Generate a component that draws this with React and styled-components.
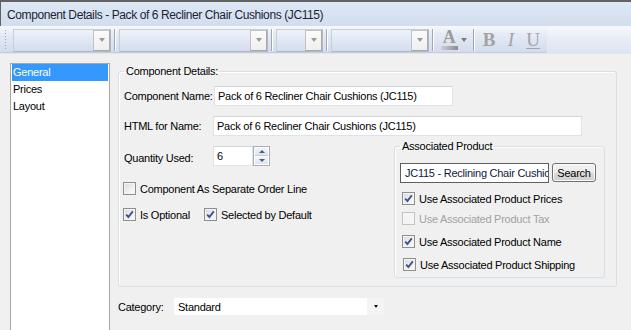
import React from 'react';
import styled, { createGlobalStyle, css } from 'styled-components';

const Global = createGlobalStyle`
  html, body { margin: 0; padding: 0; }
  body {
    background: #f0f0f0;
    width: 631px;
    height: 330px;
    overflow: hidden;
    font-family: "Liberation Sans", Arial, sans-serif;
    font-size: 11px;
    letter-spacing: -0.25px;
    color: #000;
  }
  * { box-sizing: border-box; }
`;

const Window = styled.div`
  width: 631px;
  height: 330px;
  display: flex;
  flex-direction: column;
  overflow: hidden;
`;

const TitleBar = styled.div`
  height: 26px;
  flex: none;
  border-top: 2px solid #626262;
  border-left: 1px solid #626262;
  background: linear-gradient(#dde7f4, #d2deee);
  display: flex;
  align-items: center;
  padding: 2px 0 0 6px;
  font-size: 12px;
  letter-spacing: -0.4px;
  color: #1c2433;
  white-space: nowrap;
`;

const Toolbar = styled.div`
  height: 28px;
  flex: none;
  display: flex;
  background: linear-gradient(#f6f8fc 0%, #e9eef7 40%, #dde4f1 100%);
  border-bottom: 1px solid #e2e6ee;
`;

const ToolStrip = styled.div`
  width: 547px;
  flex: none;
  height: 100%;
  display: flex;
  align-items: center;
  padding: 2px 0 0 4px;
  background: linear-gradient(#f7f9fc 0%, #e6ebf5 30%, #d3dbee 100%);
  border-bottom: 1px solid #c4cde0;
  & > * { flex: none; }
`;

const Grip = styled.span`
  width: 3px;
  height: 22px;
  margin-right: 6px;
  background-image: radial-gradient(circle, #9aa3b2 0.8px, transparent 1px);
  background-size: 3px 3px;
`;

const ToolCombo = styled.div`
  width: ${p => p.$w}px;
  height: 23px;
  display: flex;
  justify-content: flex-end;
  border: 1px solid #b3b9c3;
  border-top-color: #c8ced8;
  border-left-color: #c8ced8;
  background: linear-gradient(#eef2fa, #d3dcee);
`;

const ComboBtn = styled.div`
  width: 17px;
  height: 100%;
  display: flex;
  align-items: center;
  justify-content: center;
  border: 1px solid #c2c2c2;
  border-right-color: #a9a9a9;
  border-bottom-color: #a9a9a9;
  background: linear-gradient(#fbfbfb, #efefef);
`;

const Tri = styled.span`
  width: 0;
  height: 0;
  border-left: ${p => p.$s || 3.5}px solid transparent;
  border-right: ${p => p.$s || 3.5}px solid transparent;
  border-top: ${p => (p.$s ? p.$s + 0.5 : 4)}px solid ${p => p.$c || '#9a9a9a'};
`;

const Sep = styled.span`
  width: 2px;
  height: 22px;
  margin: 0 3px;
  border-left: 1px solid #9ea7b6;
  border-right: 1px solid #ffffff;
`;

const ColorBtn = styled.span`
  width: 18px;
  margin-left: 3px;
  display: flex;
  flex-direction: column;
  align-items: center;
  font-family: "Liberation Serif", serif;
  font-weight: bold;
  font-size: 18px;
  line-height: 14px;
  color: #9c9c9c;
`;

const ColorBar = styled.span`
  width: 17px;
  height: 4px;
  margin-top: 2px;
  background: linear-gradient(90deg, #d0d0d0, #8c8c8c);
`;

const SmallArrow = styled.span`
  margin: 0 2px 0 3px;
  width: 7px;
  display: flex;
`;

const FmtBtn = styled.span`
  width: 22px;
  text-align: center;
  font-family: "Liberation Serif", serif;
  font-size: 19px;
  line-height: 20px;
  letter-spacing: 0;
  color: #a3a3a3;
  ${p => p.$b && css`font-weight: bold;`}
  ${p => p.$i && css`font-style: italic;`}
  ${p => p.$u && css`text-decoration: underline; text-underline-offset: 2px;`}
`;

const Main = styled.div`
  flex: 1;
  display: flex;
  align-items: flex-start;
  padding: 9px 0 0 10px;
`;

const SideList = styled.ul`
  list-style: none;
  margin: 0;
  padding: 0 1px;
  width: 100px;
  height: 290px;
  flex: none;
  background: #fff;
  border: 1px solid #a6a6a6;
`;

const SideItem = styled.li`
  height: 17px;
  line-height: 17px;
  padding-left: 1px;
  color: ${p => (p.$sel ? '#fff' : '#000')};
  background: ${p => (p.$sel ? '#3399ff' : 'transparent')};
`;

const Content = styled.div`
  margin: 2px 0 0 8px;
  display: flex;
  flex-direction: column;
`;

const Group = styled.fieldset`
  margin: 0;
  width: ${p => p.$w}px;
  height: ${p => p.$h}px;
  padding: ${p => p.$pad};
  border: 1px solid #d5dfe5;
  border-radius: 3px;
  box-shadow: inset 1px 1px 0 #fff;
  display: flex;
  flex-direction: column;
`;

const Legend = styled.legend`
  padding: 0 2px;
  line-height: 13px;
  font-size: 11px;
`;

const FormRow = styled.div`
  display: flex;
  align-items: center;
  height: 20px;
  margin-top: ${p => p.$mt || 0}px;
`;

const FieldLabel = styled.span`
  width: ${p => p.$w || 89}px;
  flex: none;
  white-space: nowrap;
  padding-top: ${p => p.$pt || 0}px;
`;

const TextBox = styled.input`
  width: ${p => p.$w}px;
  height: ${p => p.$h || 20}px;
  margin: 0 0 0 ${p => p.$ml || 0}px;
  padding: 0 0 0 ${p => p.$pl || 3}px;
  font-family: "Liberation Sans", Arial, sans-serif;
  font-size: 11px;
  letter-spacing: -0.25px;
  color: ${p => p.$c || '#000'};
  background: #fff;
  border: 1px solid ${p => (p.$dark ? '#5f5f5f' : '#dfe2e8')};
  border-top-color: ${p => (p.$dark ? '#5f5f5f' : '#d0d3da')};
  outline: none;
`;

const SplitRow = styled.div`
  display: flex;
  align-items: flex-start;
  margin-top: 4px;
`;

const LeftCol = styled.div`
  width: 270px;
  padding-top: 6px;
  display: flex;
  flex-direction: column;
`;

const Spinner = styled.div`
  display: flex;
  width: 57px;
  height: 20px;
`;

const SpinBtns = styled.div`
  width: 17px;
  height: 20px;
  display: flex;
  flex-direction: column;
  border: 1px solid #a9adb5;
  background: #fff;
`;

const SpinBtn = styled.div`
  flex: 1;
  display: flex;
  align-items: center;
  justify-content: center;
  background: linear-gradient(#f2f6fb, #dbe4f0);
  border: 1px solid #fff;
  border-bottom-color: ${p => (p.$top ? '#c7ccd5' : '#fff')};
`;

const SpinTri = styled.span`
  width: 0;
  height: 0;
  border-left: 3.5px solid transparent;
  border-right: 3.5px solid transparent;
  ${p => (p.$up
    ? css`border-bottom: 3.5px solid #4c5f82;`
    : css`border-top: 3.5px solid #4c5f82;`)}
`;

const CheckRow = styled.div`
  display: flex;
  align-items: center;
  margin-top: ${p => p.$mt || 0}px;
  margin-left: ${p => p.$ml || 0}px;
`;

const CheckItem = styled.label`
  display: flex;
  align-items: center;
  gap: 4px;
  height: 13px;
  white-space: nowrap;
  width: ${p => (p.$w ? `${p.$w}px` : 'auto')};
  color: ${p => (p.$disabled ? '#a2a2a2' : '#000')};
`;

const Box = styled.span`
  width: 13px;
  height: 13px;
  flex: none;
  display: flex;
  align-items: center;
  justify-content: center;
  border: 1px solid ${p => (p.$disabled ? '#c3c3c3' : '#8e8f8f')};
  background: ${p => (p.$disabled
    ? '#f4f4f4'
    : 'linear-gradient(135deg, #d9d9d9 0%, #f1f1f1 60%, #fbfbfb 100%)')};
  box-shadow: inset 0 0 0 1px ${p => (p.$disabled ? '#f7f7f7' : '#f3f3f3')};
`;

const Check = ({ checked, disabled, label, w }) => (
  <CheckItem $disabled={disabled} $w={w}>
    <Box $disabled={disabled}>
      {checked && (
        <svg width="9" height="9" viewBox="0 0 9 9">
          <path d="M1.2 4.6 L3.4 7 L7.8 1.3" fill="none" stroke="#3f5291" strokeWidth="1.9" />
        </svg>
      )}
    </Box>
    {label}
  </CheckItem>
);

const AssocInputRow = styled.div`
  display: flex;
  align-items: flex-start;
  gap: 3px;
`;

const SearchButton = styled.button`
  width: 44px;
  height: 19px;
  padding: 0;
  font-family: "Liberation Sans", Arial, sans-serif;
  font-size: 11px;
  letter-spacing: -0.25px;
  color: #000;
  border: 1px solid #707070;
  border-radius: 3px;
  background: linear-gradient(#f2f2f2 0%, #ebebeb 50%, #dddddd 51%, #cfcfcf 100%);
  box-shadow: inset 0 0 0 1px #fcfcfc;
`;

const CategoryRow = styled.div`
  display: flex;
  align-items: center;
  margin: 10px 0 0 0;
`;

const Select = styled.div`
  width: 212px;
  height: 19px;
  display: flex;
  align-items: center;
  background: #fff;
  border: 1px solid #eef0f3;
`;

const SelectText = styled.span`
  flex: 1;
  padding-left: 4px;
`;

const SelectBtn = styled.span`
  width: 17px;
  height: 100%;
  display: flex;
  align-items: center;
  justify-content: center;
  background: #f4f4f4;
`;

export default function App() {
  return (
    <>
      <Global />
      <Window>
        <TitleBar>Component Details - Pack of 6 Recliner Chair Cushions (JC115)</TitleBar>
        <Toolbar>
          <ToolStrip>
            <Grip />
            <ToolCombo $w={98}><ComboBtn><Tri /></ComboBtn></ToolCombo>
            <Sep />
            <ToolCombo $w={149}><ComboBtn><Tri /></ComboBtn></ToolCombo>
            <Sep />
            <ToolCombo $w={47}><ComboBtn><Tri /></ComboBtn></ToolCombo>
            <Sep />
            <ToolCombo $w={98}><ComboBtn><Tri /></ComboBtn></ToolCombo>
            <Sep />
            <ColorBtn>A<ColorBar /></ColorBtn>
            <SmallArrow><Tri $c="#7a7a7a" /></SmallArrow>
            <Sep />
            <FmtBtn $b>B</FmtBtn>
            <FmtBtn $i>I</FmtBtn>
            <FmtBtn $u>U</FmtBtn>
          </ToolStrip>
        </Toolbar>
        <Main>
          <SideList>
            <SideItem $sel>General</SideItem>
            <SideItem>Prices</SideItem>
            <SideItem>Layout</SideItem>
          </SideList>
          <Content>
            <Group $w={499} $h={222} $pad="8px 5px 0 5px">
              <Legend>Component Details:</Legend>
              <FormRow>
                <FieldLabel>Component Name:</FieldLabel>
                <TextBox $w={239} $ml={1} readOnly value="Pack of 6 Recliner Chair Cushions (JC115)" />
              </FormRow>
              <FormRow $mt={10}>
                <FieldLabel>HTML for Name:</FieldLabel>
                <TextBox $w={369} readOnly value="Pack of 6 Recliner Chair Cushions (JC115)" />
              </FormRow>
              <SplitRow>
                <LeftCol>
                  <FormRow>
                    <FieldLabel $pt={4}>Quantity Used:</FieldLabel>
                    <Spinner>
                      <TextBox $w={40} readOnly value="6" />
                      <SpinBtns>
                        <SpinBtn $top><SpinTri $up /></SpinBtn>
                        <SpinBtn><SpinTri /></SpinBtn>
                      </SpinBtns>
                    </Spinner>
                  </FormRow>
                  <CheckRow $mt={16} $ml={-1}>
                    <Check label="Component As Separate Order Line" />
                  </CheckRow>
                  <CheckRow $mt={13} $ml={-1}>
                    <Check checked label="Is Optional" w={81} />
                    <Check checked label="Selected by Default" />
                  </CheckRow>
                </LeftCol>
                <Group $w={211} $h={138} $pad="10px 5px 0 5px">
                  <Legend>Associated Product</Legend>
                  <AssocInputRow>
                    <TextBox $w={149} $dark $pl={4} $c="#0b1a3d" readOnly value="JC115 - Reclining Chair Cushions" />
                    <SearchButton>Search</SearchButton>
                  </AssocInputRow>
                  <CheckRow $mt={9} $ml={2}>
                    <Check checked label="Use Associated Product Prices" />
                  </CheckRow>
                  <CheckRow $mt={7} $ml={2}>
                    <Check disabled label="Use Associated Product Tax" />
                  </CheckRow>
                  <CheckRow $mt={10} $ml={2}>
                    <Check checked label="Use Associated Product Name" />
                  </CheckRow>
                  <CheckRow $mt={10} $ml={3}>
                    <Check checked label="Use Associated Product Shipping" />
                  </CheckRow>
                </Group>
              </SplitRow>
            </Group>
            <CategoryRow>
              <FieldLabel $w={55}>Category:</FieldLabel>
              <Select>
                <SelectText>Standard</SelectText>
                <SelectBtn><Tri $c="#111" $s={2.5} /></SelectBtn>
              </Select>
            </CategoryRow>
          </Content>
        </Main>
      </Window>
    </>
  );
}
